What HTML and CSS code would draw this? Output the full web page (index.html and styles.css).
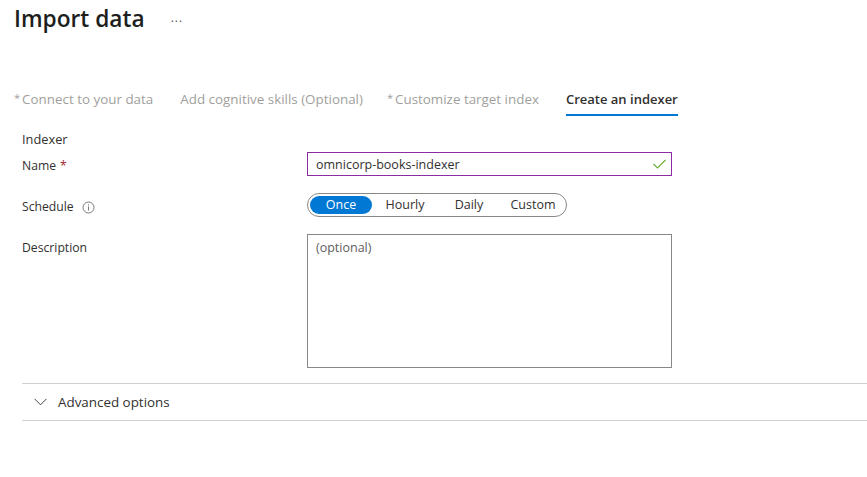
FILE: index.html
```html
<!DOCTYPE html>
<html lang="en">
<head>
    <meta charset="UTF-8">
    <meta name="viewport" content="width=device-width, initial-scale=1.0">
    <title>Import data</title>
    <link rel="stylesheet" href="styles.css">
</head>
<body>
    <header class="title-bar">
        <h1>Import data</h1>
        <span class="more">...</span>
    </header>

    <nav class="tabs">
        <a class="tab"><span class="star">*</span>Connect to your data</a>
        <a class="tab tab-skills">Add cognitive skills (Optional)</a>
        <a class="tab"><span class="star">*</span>Customize target index</a>
        <a class="tab tab-active">Create an indexer</a>
    </nav>

    <main class="form">
        <div class="section-label">Indexer</div>

        <div class="row row-name">
            <label class="label">Name <span class="required">*</span></label>
            <div class="name-field">
                <span class="name-value">omnicorp-books-indexer</span>
                <svg class="check" width="13" height="10" viewBox="0 0 13 10">
                    <path d="M0.5 5 L4.5 9 L12.5 1" fill="none" stroke="#6fb03c" stroke-width="1.2"/>
                </svg>
            </div>
        </div>

        <div class="row row-schedule">
            <label class="label">Schedule
                <svg class="info" width="13" height="13" viewBox="0 0 13 13">
                    <circle cx="6.5" cy="6.5" r="5.5" fill="none" stroke="#777" stroke-width="1"/>
                    <path d="M6.5 5.5 V9.5 M6.5 3.4 V4.5" stroke="#777" stroke-width="1"/>
                </svg>
            </label>
            <div class="pills">
                <span class="pill pill-on">Once</span>
                <span class="pill">Hourly</span>
                <span class="pill pill-daily">Daily</span>
                <span class="pill">Custom</span>
            </div>
        </div>

        <div class="row row-description">
            <label class="label">Description</label>
            <div class="description-box">(optional)</div>
        </div>

        <div class="advanced">
            <svg class="chevron" width="13" height="8" viewBox="0 0 13 8">
                <path d="M0.5 0.8 L6.5 6.8 L12.5 0.8" fill="none" stroke="#444" stroke-width="1"/>
            </svg>
            <span>Advanced options</span>
        </div>
    </main>
</body>
</html>
```

FILE: styles.css
```css
body {
    font-family: "Open Sans", "Noto Sans", sans-serif;
    font-size: 12.5px;
    color: #323130;
    background-color: #fff;
    margin: 0;
    padding: 0;
    overflow: hidden;
}

.title-bar {
    display: flex;
    align-items: flex-start;
    height: 89px;
    padding-left: 14px;
}

h1 {
    margin: 3px 0 0;
    font-size: 22.7px;
    line-height: 32px;
    font-weight: 600;
    color: #201f1e;
}

.more {
    margin: 10px 0 0 26px;
    font-size: 12px;
    line-height: 16px;
    letter-spacing: 1px;
    color: #555;
}

.tabs {
    display: flex;
    padding-left: 14px;
    height: 28px;
}

.tab {
    margin-right: 27px;
    height: 25px;
    font-size: 13.4px;
    line-height: 20px;
    color: #a19f9d;
    white-space: nowrap;
}

.tab-skills {
    margin-right: 24px;
}

.tab-active {
    margin-right: 0;
    font-size: 13px;
    color: #323130;
    font-weight: 600;
    border-bottom: 2px solid #0078d4;
}

.star {
    margin-right: 2px;
    position: relative;
    top: -2px;
    font-size: 11px;
}

.form {
    padding-left: 22px;
}

.section-label {
    margin-top: 13px;
    line-height: 18px;
    font-size: 12.8px;
}

.row {
    display: flex;
}

.label {
    display: flex;
    align-items: flex-start;
    width: 285px;
    padding-top: 5px;
    font-size: 12.2px;
    line-height: 18px;
    flex-shrink: 0;
}

.required {
    margin-left: 4px;
    color: #a4262c;
}

.info {
    margin: 3px 0 0 8px;
}

.row-name {
    margin-top: 4px;
    height: 41px;
}

.name-field {
    box-sizing: border-box;
    display: flex;
    justify-content: space-between;
    align-items: center;
    width: 365px;
    height: 24px;
    padding: 0 5px 0 8px;
    border: 1px solid #8a2da5;
}

.row-schedule {
    height: 41px;
}

.pills {
    box-sizing: border-box;
    display: flex;
    align-items: center;
    width: 260px;
    height: 24px;
    padding-left: 2px;
    border: 1px solid #8a8886;
    border-radius: 12px;
}

.pill {
    flex-shrink: 0;
    width: 66px;
    text-align: center;
    line-height: 18px;
}

.pill-on {
    width: 62px;
    background-color: #0078d4;
    color: #fff;
    border-radius: 9px;
}

.pill-daily {
    width: 62px;
}

.row-description {
    height: 149px;
}

.description-box {
    box-sizing: border-box;
    width: 365px;
    height: 134px;
    padding: 4px 8px;
    border: 1px solid #8a8886;
    color: #605e5c;
}

.advanced {
    display: flex;
    align-items: center;
    height: 36px;
    font-size: 13.4px;
    border-top: 1px solid #d2d0ce;
    border-bottom: 1px solid #d2d0ce;
}

.chevron {
    margin: 0 11px 0 12px;
}
```
